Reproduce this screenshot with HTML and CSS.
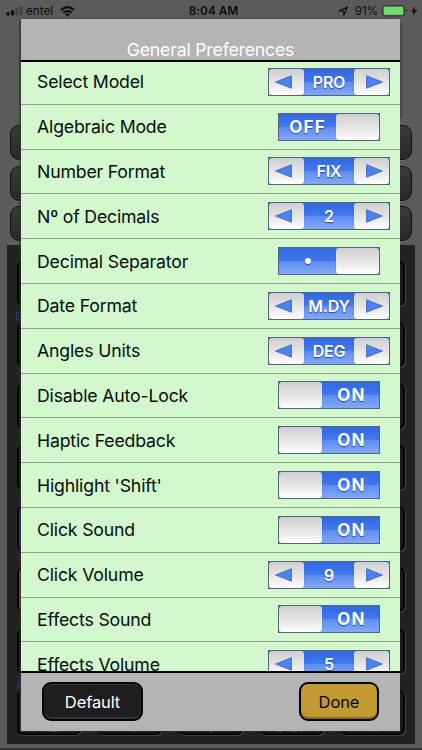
FILE: index.html
```
<!DOCTYPE html>
<html lang="en">
<head>
<meta charset="utf-8">
<title>General Preferences</title>
<link rel="stylesheet" href="styles.css">
</head>
<body>
<div class="screen">
  <div class="calc" aria-hidden="true">
    <div class="display"></div>
    <div class="bars"><i></i><i></i><i></i></div>
    <div class="keypad" id="keypad"><span class="tag tag-d">D</span><span class="tag tag-a">A</span></div>
  </div>
  <header class="status">
    <div class="left">
      <svg class="signal" width="17" height="10" viewBox="0 0 17 10"><rect x="0.5" y="6" width="3" height="3.5" rx="1" fill="#0c0c0c"/><rect x="5" y="4.2" width="3" height="5.3" rx="1" fill="#0c0c0c"/><rect x="9.2" y="2" width="3" height="7.5" rx="1" fill="#424242"/><rect x="13.4" y="0" width="3" height="9.5" rx="1" fill="#424242"/></svg>
      <span class="carrier">entel</span>
      <svg class="wifi" width="15" height="11" viewBox="0 0 15 11"><g fill="none" stroke="#0c0c0c" stroke-width="2"><path d="M1 4.1Q7.5-1.9 14 4.1"/><path d="M3.3 6.8Q7.5 3.1 11.7 6.8"/></g><path d="M5.1 8.1Q7.5 6.4 9.9 8.1L7.5 10.7Z" fill="#0c0c0c"/></svg>
    </div>
    <div class="time">8:04 AM</div>
    <div class="right">
      <svg width="11" height="10" viewBox="0 0 11 10"><path d="M1 5L9.6 1 5.8 9.2V5Z" fill="none" stroke="#0c0c0c" stroke-width="1.1" stroke-linejoin="round"/></svg>
      <span class="percent">91%</span>
      <svg class="battery" width="27" height="12" viewBox="0 0 27 12"><rect x=".5" y=".5" width="22" height="10.5" rx="2.3" fill="none" stroke="#333"/><rect x="1.8" y="1.8" width="19.4" height="8" rx="1" fill="#6fdb6b"/><path d="M24 4Q26.6 5.7 24 7.5Z" fill="#333"/></svg>
      <svg class="bolt" width="6" height="10" viewBox="0 0 6 10"><path d="M3.8.2L.2 5.4H2.7L1.8 9.8 5.8 4H3.4Z" fill="#0c0c0c"/></svg>
    </div>
  </header>
  <main class="modal">
    <h1 class="title"><span>General Preferences</span></h1>
    <div class="list" id="list"></div>
    <footer class="actions"><button class="btn default">Default</button><button class="btn done">Done</button></footer>
  </main>
</div>
<script src="app.js"></script>
</body>
</html>
```
FILE: styles.css
```
* { box-sizing: border-box; }
body { margin: 0; font-family: Inter, "Liberation Sans", sans-serif; }
.screen { position: relative; width: 422px; height: 750px; overflow: hidden; background: #5b5b5b; }
.calc { position: absolute; inset: 0; padding: 22px 7px 0; border-bottom: 2px solid #333; }
.display { height: 97px; margin: 0 13px; border-radius: 5px; background: #4c4c4c; box-shadow: 0 0 2px #333; }
.bars { display: grid; gap: 5.5px; padding: 6px 3px 0; }
.bars i { height: 35px; border: 1.5px solid #111; border-radius: 9px; background: linear-gradient(#3a3a3a, #292929); box-shadow: 0 1px 0 #6a6a6a; }
.keypad { position: relative; display: grid; grid-template-columns: repeat(5, 64px); column-gap: 17px; grid-auto-rows: 45px; row-gap: 16.3px; height: 499px; margin-top: 4px; padding: 16px 10px 0; background: #222; }
.key { border: 2px solid #050505; border-radius: 6px; background: #191919; box-shadow: 1px 1px 1px #444; color: #70411f; font-size: 15px; line-height: 70px; text-align: center; overflow: hidden; }
.key.blue { background: #173b91; }
.key.orange { background: #8a4b0b; }
.tag { position: absolute; left: 8px; color: #203f85; font-size: 11px; line-height: 12px; }
.tag-d { top: 65px; }
.tag-a { top: 434px; left: 9px; font-style: italic; }

.status { position: absolute; inset: 0 0 auto; height: 21px; display: grid; grid-template-columns: 1fr auto 1fr; align-items: center; color: #0c0c0c; font-size: 11.7px; line-height: 22px; }
.left, .right { display: flex; align-items: center; height: 21px; }
.left { padding-left: 6px; }
.right { justify-content: flex-end; padding-right: 5px; }
.carrier { margin-left: 3px; }
.wifi { margin-left: 7px; }
.time { font-weight: 600; padding-left: 5px; letter-spacing: .1px; }
.percent { margin-left: 6px; letter-spacing: -.1px; }
.battery { margin-left: 4px; }
.bolt { margin-left: 2px; }

.modal { position: absolute; left: 21px; top: 19px; width: 379px; height: 711.5px; display: flex; flex-direction: column; background: #b4b4b4; box-shadow: -1px 0 2px #333; }
.title { flex: none; height: 43px; margin: 0; border-bottom: 2px solid #050505; color: #fff; text-align: center; font-size: 17.7px; font-weight: 400; line-height: 62px; letter-spacing: -.2px; position: relative; z-index: 1; }
.list { flex: none; height: 609px; overflow: hidden; background: #d3f8ce; }
.row { height: 44.8px; display: flex; align-items: center; justify-content: space-between; padding: 0 10px 0 16px; border-bottom: 1px solid #8ca389; font-size: 17.7px; letter-spacing: -.18px; color: #080d08; }
.row:first-child { height: 42.8px; padding-bottom: 2px; }
.row.sw { padding-right: 20px; }
.control { display: flex; height: 28px; border: 1px solid #566282; background: linear-gradient(#3269e2, #4178ec 48%, #5f8df0 52%, #82a8f7); color: #fff; font-size: 17px; font-weight: 700; text-shadow: 0 1px 1px #234ba7; overflow: hidden; }
.stepper { width: 122px; }
.switch { width: 102px; letter-spacing: 1.2px; }
.value { flex: 1; display: flex; align-items: center; justify-content: center; }
.stepper .value { letter-spacing: -.2px; font-weight: 600; font-size: 16px; }
.knob { flex: none; display: flex; align-items: center; justify-content: center; border-radius: 3px; background: linear-gradient(#cecece, #ececec 65%, #fff); box-shadow: 0 0 1px #334f8b; }
.stepper .knob { width: 35px; }
.stepper .knob:first-child { justify-content: flex-start; padding-left: 6px; }
.stepper .knob:last-child { justify-content: flex-end; padding-right: 6px; }
.switch .knob { width: 43px; }
.on .value { padding-left: 2px; }
.dot { width: 6px; height: 6px; border-radius: 50%; background: #fff; box-shadow: 0 1px 1px #234ba7; }
.actions { flex: 1; border-top: 2px solid #050505; display: flex; justify-content: space-between; align-items: flex-start; padding: 9px 21px 0; }
.btn { height: 39px; border: 2px solid #050505; border-radius: 9px; padding: 0; font: 400 16.5px Inter, "Liberation Sans", sans-serif; letter-spacing: -.1px; }
.default { width: 101px; color: #fff; background: #1e1e1e; box-shadow: inset 0 -2px 1px #343434, inset 0 1px 0 #3a3a3a; }
.done { width: 80px; color: #080808; background: #c39a32; box-shadow: inset 0 -2px 1px #8b681a; }
```
FILE: app.js
```
const rows = [
  ["Select Model", "step", "PRO"], ["Algebraic Mode", "off", "OFF"],
  ["Number Format", "step", "FIX"], ["Nº of Decimals", "step", "2"],
  ["Decimal Separator", "off", ""], ["Date Format", "step", "M.DY"],
  ["Angles Units", "step", "DEG"], ["Disable Auto-Lock", "on", "ON"],
  ["Haptic Feedback", "on", "ON"], ["Highlight 'Shift'", "on", "ON"],
  ["Click Sound", "on", "ON"], ["Click Volume", "step", "9"],
  ["Effects Sound", "on", "ON"], ["Effects Volume", "step", "5"]
];
const arrow = (points) => `<div class="knob"><svg width="17" height="14" viewBox="0 0 17 14"><path d="${points}" fill="#4b82ed"/><path d="${points}" fill="none" stroke="#315bae" stroke-width=".7"/></svg></div>`;
document.getElementById("list").innerHTML = rows.map(([label, kind, text]) => {
  const value = `<div class="value">${text || '<span class="dot"></span>'}</div>`;
  const knob = '<div class="knob"></div>';
  const control = kind === "step"
    ? `<div class="control stepper">${arrow("M.5 7L16.5.7V13.3Z")}${value}${arrow("M16.5 7L.5.7V13.3Z")}</div>`
    : `<div class="control switch ${kind}">${kind === "on" ? knob + value : value + knob}</div>`;
  return `<div class="row ${kind === "step" ? "" : "sw"}"><span class="label">${label}</span>${control}</div>`;
}).join("");

const captions = ["PREF", "%", "y", "DISP", "W"];
let keys = "";
for (let r = 0; r < 8; r++) {
  for (let c = 0; c < 5; c++) {
    const tone = c === 0 && r === 4 ? "blue" : c === 0 && r === 5 ? "orange" : "";
    keys += `<div class="key ${tone}">${r === 7 ? captions[c] : ""}</div>`;
  }
}
document.getElementById("keypad").insertAdjacentHTML("beforeend", keys);
```
